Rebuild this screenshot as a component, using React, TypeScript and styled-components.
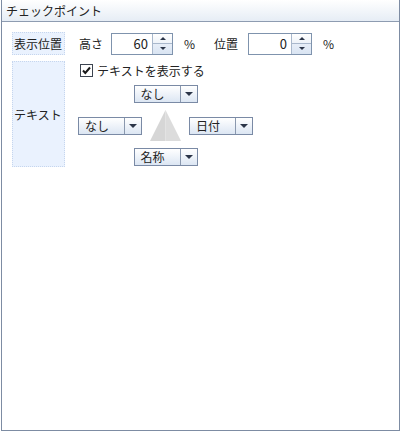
import * as React from 'react';
import styled, { createGlobalStyle } from 'styled-components';

const GlobalStyle = createGlobalStyle`
    html, body {
        margin: 0;
        padding: 0;
        background: #ffffff;
    }
    body {
        font-family: "Noto Sans CJK JP", "Noto Sans", sans-serif;
        font-size: 12px;
        color: #222222;
    }
`;

const Frame = styled.div`
    margin-left: 1px;
    width: 399px;
    height: 431px;
    box-sizing: border-box;
    border: 1px solid #7d8ca3;
    border-top: none;
    display: flex;
    flex-direction: column;
    background: #ffffff;
`;

const Header = styled.div`
    height: 22px;
    box-sizing: border-box;
    padding-left: 4px;
    border-bottom: 1px solid #8e9cb1;
    background: linear-gradient(#ffffff, #e6edf5);
    line-height: 21px;
    font-size: 12px;
`;

const Body = styled.div`
    padding: 10px 0 0 10px;
    display: grid;
    grid-template-columns: 53px 1fr;
    grid-template-rows: 23px 106px;
    column-gap: 14px;
    row-gap: 6px;
`;

const Caption = styled.div`
    box-sizing: border-box;
    background: #eaf2fe;
    border: 1px dotted #c6d6ee;
    display: flex;
    align-items: center;
    padding-left: 1px;
    font-size: 12px;
    white-space: nowrap;
`;

const Row = styled.div`
    display: flex;
    align-items: center;
`;

const FieldLabel = styled.span<{ $w: number }>`
    width: ${(p) => p.$w}px;
    flex-shrink: 0;
`;

const Unit = styled.span<{ $ml: number; $w: number }>`
    margin-left: ${(p) => p.$ml}px;
    width: ${(p) => p.$w}px;
    flex-shrink: 0;
`;

const SpinBox = styled.div<{ $w: number }>`
    display: flex;
    width: ${(p) => p.$w}px;
    height: 22px;
    box-sizing: border-box;
    border: 1px solid #7f93ad;
    background: #ffffff;
`;

const SpinValue = styled.div`
    flex: 1;
    text-align: right;
    padding-right: 4px;
    line-height: 20px;
    font-size: 13px;
`;

const SpinButtons = styled.div`
    width: 19px;
    display: flex;
    flex-direction: column;
    border-left: 1px solid #a9b8cc;
`;

const SpinButton = styled.div<{ $down?: boolean }>`
    flex: 1;
    display: flex;
    align-items: center;
    justify-content: center;
    background: ${(p) => (p.$down ? 'linear-gradient(#e7eef8, #d9e4f2)' : 'linear-gradient(#ffffff, #eef3f9)')};
    border-top: ${(p) => (p.$down ? '1px solid #a9b8cc' : 'none')};
`;

const Arrow = styled.span<{ $down?: boolean }>`
    width: 0;
    height: 0;
    border-left: 3px solid transparent;
    border-right: 3px solid transparent;
    ${(p) => (p.$down ? 'border-top: 3px solid #2b3548;' : 'border-bottom: 3px solid #2b3548;')}
`;

const TextSection = styled.div`
    display: flex;
    flex-direction: column;
    padding-top: 3px;
`;

const CheckRow = styled.label`
    display: flex;
    align-items: center;
    gap: 4px;
    height: 13px;
    margin-left: 1px;
`;

const PlaceGrid = styled.div`
    margin-top: 8px;
    margin-left: -1px;
    display: grid;
    grid-template-columns: 64px 47px 64px;
    grid-template-rows: 18px 31px 18px;
    row-gap: 7px;
    align-items: center;
`;

const Wide = styled.div`
    grid-column: 1 / span 3;
    justify-self: center;
`;

const Combo = styled.div`
    width: 64px;
    height: 18px;
    box-sizing: border-box;
    border: 1px solid #7a8aa5;
    background: linear-gradient(#ffffff, #dce6f3);
    display: flex;
`;

const ComboText = styled.div`
    flex: 1;
    padding-left: 6px;
    line-height: 16px;
    font-size: 12px;
`;

const ComboButton = styled.div`
    width: 16px;
    border-left: 1px solid #8a98ae;
    display: flex;
    align-items: center;
    justify-content: center;
`;

const ComboArrow = styled.span`
    width: 0;
    height: 0;
    border-left: 4px solid transparent;
    border-right: 4px solid transparent;
    border-top: 4px solid #2b3548;
`;

const Marker = styled.div`
    display: flex;
    justify-content: center;
`;

function Spinner({ value, width }: { value: string; width: number }) {
    return (
        <SpinBox $w={width}>
            <SpinValue>{value}</SpinValue>
            <SpinButtons>
                <SpinButton>
                    <Arrow />
                </SpinButton>
                <SpinButton $down>
                    <Arrow $down />
                </SpinButton>
            </SpinButtons>
        </SpinBox>
    );
}

function Select({ text }: { text: string }) {
    return (
        <Combo>
            <ComboText>{text}</ComboText>
            <ComboButton>
                <ComboArrow />
            </ComboButton>
        </Combo>
    );
}

function CheckIcon() {
    return (
        <svg width="13" height="13" viewBox="0 0 13 13">
            <rect x="0.5" y="0.5" width="12" height="12" fill="#ffffff" stroke="#3c4450" />
            <path d="M3 6.5 L5.3 9 L10 3.5" fill="none" stroke="#1a1a1a" strokeWidth="2" />
        </svg>
    );
}

function Triangle() {
    return (
        <svg width="31" height="31" viewBox="0 0 31 31">
            <polygon points="15.5,0 0,31 15.5,31" fill="#d6d6d6" />
            <polygon points="15.5,0 31,31 15.5,31" fill="#dcdcdc" />
        </svg>
    );
}

function App() {
    return (
        <>
            <GlobalStyle />
            <Frame>
                <Header>チェックポイント</Header>
                <Body>
                    <Caption>表示位置</Caption>
                    <Row>
                        <FieldLabel $w={32}>高さ</FieldLabel>
                        <Spinner value="60" width={62} />
                        <Unit $ml={11} $w={30}>%</Unit>
                        <FieldLabel $w={34}>位置</FieldLabel>
                        <Spinner value="0" width={64} />
                        <Unit $ml={11} $w={12}>%</Unit>
                    </Row>
                    <Caption>テキスト</Caption>
                    <TextSection>
                        <CheckRow>
                            <CheckIcon />
                            テキストを表示する
                        </CheckRow>
                        <PlaceGrid>
                            <Wide>
                                <Select text="なし" />
                            </Wide>
                            <Select text="なし" />
                            <Marker>
                                <Triangle />
                            </Marker>
                            <Select text="日付" />
                            <Wide>
                                <Select text="名称" />
                            </Wide>
                        </PlaceGrid>
                    </TextSection>
                </Body>
            </Frame>
        </>
    );
}

export default App;
